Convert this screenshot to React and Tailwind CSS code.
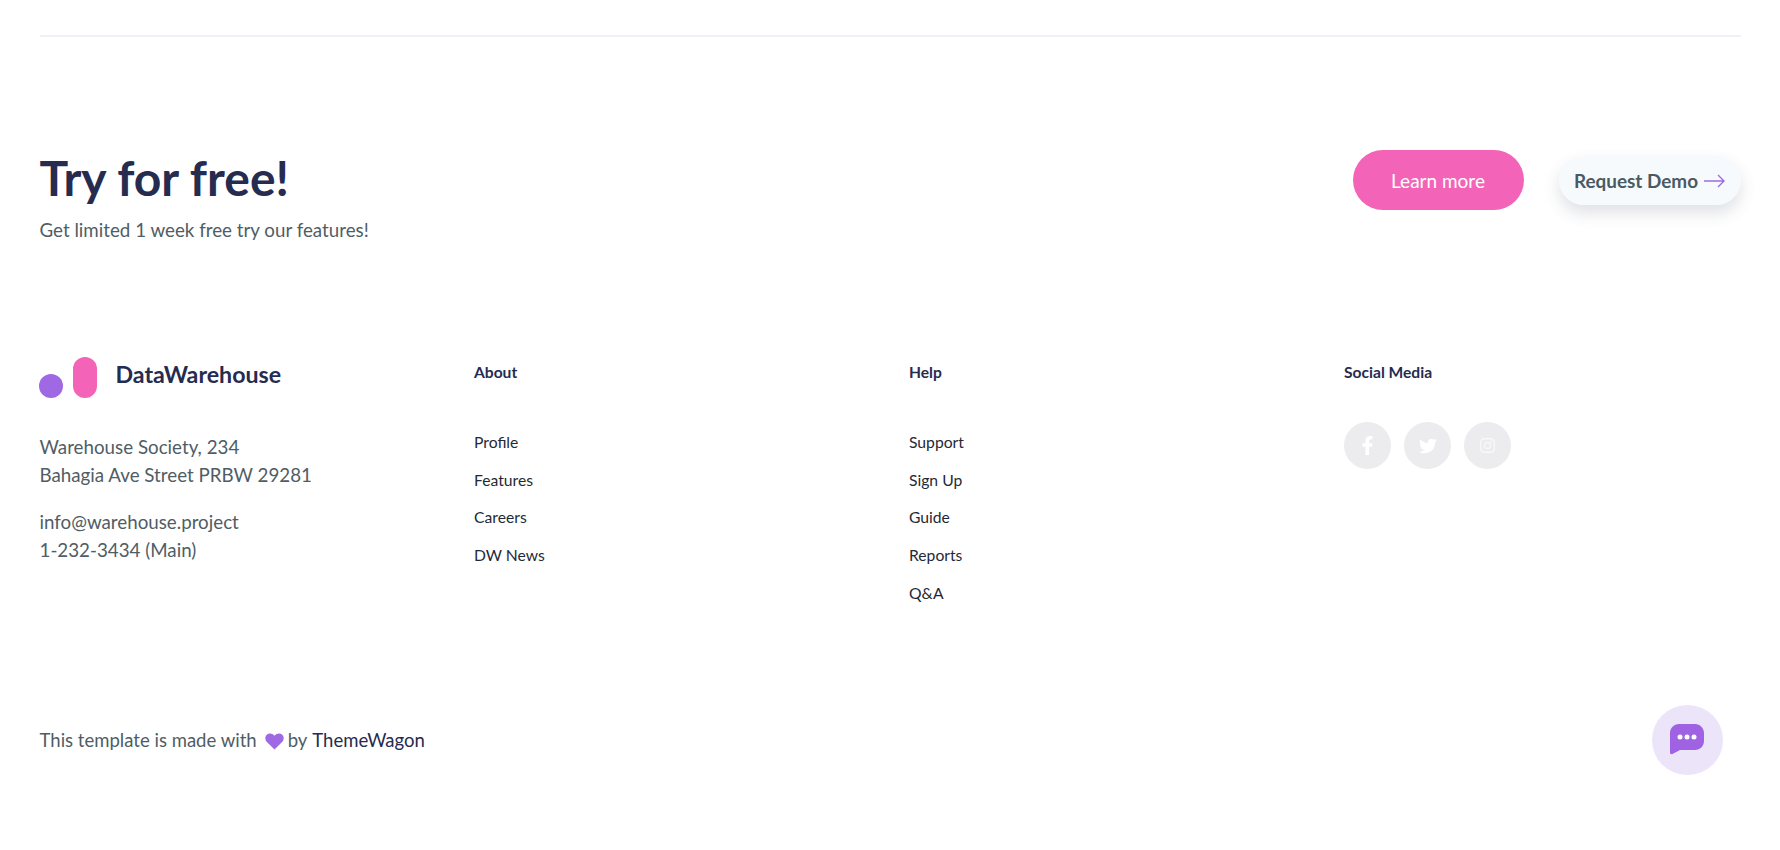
import React from 'react';
import { FaFacebookF, FaTwitter, FaInstagram } from 'react-icons/fa';

const columns = [
  { title: 'About', links: ['Profile', 'Features', 'Careers', 'DW News'] },
  { title: 'Help', links: ['Support', 'Sign Up', 'Guide', 'Reports', 'Q&A'] },
];

function Logo() {
  return (
    <div className="-ml-[1px] flex items-end gap-[10px]">
      <div className="h-[24px] w-[24px] rounded-full bg-[#9f69e3]" />
      <div className="h-[41px] w-[24px] rounded-full bg-[#f364b8]" />
    </div>
  );
}

export default function App() {
  return (
    <div className="relative h-[850px] overflow-hidden bg-white px-[39.5px] font-['Lato',sans-serif]">
      <div className="h-[37px] border-b-2 border-[#f1f0f9]" />

      <div className="mt-[109px] flex items-start justify-between">
        <div>
          <h1 className="text-[48px] leading-[64px] font-bold text-[#262b50]">Try for free!</h1>
          <p className="mt-[6px] text-[18.75px] leading-[28px] text-[#4f5d65]">
            Get limited 1 week free try our features!
          </p>
        </div>
        <div className="mt-[4px] flex items-center gap-[35px]">
          <button className="h-[60px] w-[171px] rounded-full bg-[#f364b8] pt-[2px] text-[19px] text-white">
            Learn more
          </button>
          <button className="flex h-[49px] w-[182px] items-center justify-center gap-[5px] rounded-full bg-[#f7fafc] pt-[2px] text-[18.9px] font-bold text-[#4a5a63] shadow-[0_8px_16px_rgba(60,70,90,0.16)]">
            Request Demo
            <svg width="22" height="14" viewBox="0 0 22 14" fill="none" stroke="#9a6fdc" strokeWidth="1.4">
              <path d="M1 7h20M15 1l6 6-6 6" />
            </svg>
          </button>
        </div>
      </div>

      <div className="mt-[116px] grid grid-cols-[434.5px_435px_435px_1fr]">
        <div className="-mt-[3px]">
          <div className="flex items-start gap-[19px]">
            <Logo />
            <span className="mt-[1px] text-[23.2px] leading-[32px] font-bold text-[#262b50]">DataWarehouse</span>
          </div>
          <div className="mt-[35px] text-[18.75px] leading-[28px] text-[#4f5d65]">
            <p>Warehouse Society, 234</p>
            <p>Bahagia Ave Street PRBW 29281</p>
            <p className="mt-[19px]">info@warehouse.project</p>
            <p>1-232-3434 (Main)</p>
          </div>
        </div>

        {columns.map(col => (
          <div key={col.title}>
            <h4 className="text-[15.6px] leading-[24px] font-bold text-[#262b50]">{col.title}</h4>
            <ul className="mt-[46px] flex flex-col gap-[13.7px]">
              {col.links.map(link => (
                <li key={link} className="text-[15.7px] leading-[24px] text-[#1f2937]">{link}</li>
              ))}
            </ul>
          </div>
        ))}

        <div>
          <h4 className="text-[15.6px] leading-[24px] font-bold text-[#262b50]">Social Media</h4>
          <div className="mt-[38px] flex gap-[13px]">
            <div className="flex h-[47px] w-[47px] items-center justify-center rounded-full bg-[#ececee] text-white">
              <FaFacebookF size={19} />
            </div>
            <div className="flex h-[47px] w-[47px] items-center justify-center rounded-full bg-[#ececee] text-white">
              <FaTwitter size={18} />
            </div>
            <div className="flex h-[47px] w-[47px] items-center justify-center rounded-full bg-[#ececee] text-[#f8f8f9]">
              <FaInstagram size={17} />
            </div>
          </div>
        </div>
      </div>

      <div className="absolute top-[726px] left-[39.5px] flex items-center text-[18.55px] leading-[28px] text-[#4f5d65]">
        <span>This template is made with</span>
        <svg className="mt-[3px] mr-[4px] ml-[8px]" width="19" height="17" viewBox="0 0 24 22" fill="#9f69e3">
          <path d="M12 21.5 2.2 11.6C-.6 8.7-.5 4.6 2 2.2 4.6-.3 8.9-.1 12 3.4c3.1-3.500 7.400-3.700 10-1.200 2.500 2.400 2.600 6.500-.2 9.400z" />
        </svg>
        <span>by</span>
        <span className="ml-[5px] text-[#262b50]">ThemeWagon</span>
      </div>

      <div className="absolute top-[705px] left-[1652px] flex h-[70px] w-[71px] items-center justify-center rounded-full bg-[#ece5f9]">
        <svg className="-mt-[2px] -ml-[1px]" width="36" height="32" viewBox="0 0 36 32">
          <path d="M10 1h16c5 0 9 4 9 9v8c0 5-4 9-9 9H11l-7.500 4c-1.200.6-2.500-.2-2.500-1.500V10c0-5 4-9 9-9z" fill="#9f62e3" />
          <circle cx="11" cy="14" r="2.500" fill="#fff" />
          <circle cx="18" cy="14" r="2.500" fill="#fff" />
          <circle cx="25" cy="14" r="2.500" fill="#fff" />
        </svg>
      </div>
    </div>
  );
}
